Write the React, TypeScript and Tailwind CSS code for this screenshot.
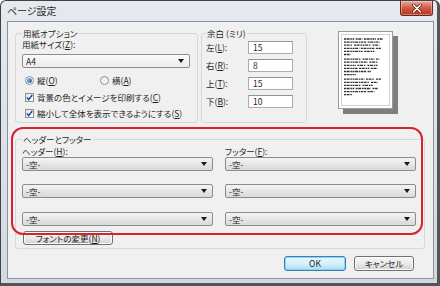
import type { ReactNode } from 'react';

// mnemonic letter (underlined access key)
function M({ children }: { children: ReactNode }) {
  return <span className="underline underline-offset-[1px]">{children}</span>;
}

function Combo({ value, white }: { value: string; white?: boolean }) {
  return (
    <div
      className={`flex h-[14px] items-center justify-between rounded-[2px] border border-[#8b8c8c] pl-[3px] pr-[5px] bg-gradient-to-b ${
        white ? 'from-[#fbfbfb] to-[#ececec]' : 'from-[#f4f4f4] to-[#d9d9d9]'
      }`}
    >
      <span className="text-[8.5px] leading-none">{value}</span>
      <svg width="6" height="4" viewBox="0 0 6 4">
        <path d="M0 0h6L3 4z" fill="#1a1a1a" />
      </svg>
    </div>
  );
}

function Radio({ checked, label }: { checked?: boolean; label: ReactNode }) {
  return (
    <div className="flex h-[12px] items-center gap-[3px]">
      <div className="flex h-[9px] w-[9px] items-center justify-center rounded-full border border-[#8e8f8f] bg-gradient-to-br from-[#e9e9e9] to-[#fbfbfb]">
        {checked && <div className="h-[5px] w-[5px] rounded-full bg-gradient-to-br from-[#8fc2ee] to-[#1d5d9e]" />}
      </div>
      <span className="whitespace-nowrap text-[8.5px] leading-none">{label}</span>
    </div>
  );
}

function Check({ label }: { label: ReactNode }) {
  return (
    <div className="flex h-[12px] items-center gap-[3px]">
      <div className="flex h-[9px] w-[9px] shrink-0 items-center justify-center border border-[#8e8f8f] bg-gradient-to-br from-[#e4e4e4] to-[#fbfbfb]">
        <svg width="7" height="7" viewBox="0 0 7 7">
          <path d="M0.8 3.6 2.7 5.6 6.2 1" fill="none" stroke="#21479b" strokeWidth="1.5" />
        </svg>
      </div>
      <span className="whitespace-nowrap text-[8.5px] leading-none">{label}</span>
    </div>
  );
}

function MarginRow({ label, value }: { label: ReactNode; value: string }) {
  return (
    <div className="flex h-[13px] items-center">
      <span className="w-[42px] text-[8.5px] leading-none">{label}</span>
      <div className="flex h-[13px] w-[45px] items-center border border-[#abadb3] border-t-[#8f939a] bg-white pl-[4px] text-[8.5px] leading-none">
        {value}
      </div>
    </div>
  );
}

const LINES = [
  [12, 8, 14, 6], [26, 14], [10, 20, 8], [18, 16, 6], [22, 12], [8],
  [20, 14, 4], [28, 10], [14, 10, 12], [16, 12, 8], [26, 4], [14],
  [24, 10, 6], [30, 8], [20, 12], [12, 18, 6], [26, 8], [10],
];

function Preview() {
  let y = 7;
  const rows: ReactNode[] = [];
  LINES.forEach((segs, i) => {
    let x = 5;
    segs.forEach((w, j) => {
      rows.push(
        <line
          key={`${i}-${j}`}
          x1={x}
          y1={y}
          x2={Math.min(x + w * 0.85, 47)}
          y2={y}
          stroke="#2e2e2e"
          strokeWidth="1.3"
          strokeDasharray="2 0.6 3 0.8 1.5 0.6"
        />
      );
      x += w * 0.85 + 1.5;
    });
    y += i === 5 || i === 11 ? 4.6 : 3.1;
  });
  return (
    <div className="ml-[31px] mt-[4px] h-[83px] w-[60px] shrink-0">
      <div className="relative h-[78px] w-[55px] border border-[#9a9a9a] bg-white shadow-[5px_5px_0_#7e7e7e]">
        <svg width="53" height="76" viewBox="0 0 53 76" className="block">
          <rect x="2.5" y="2.5" width="48" height="71" fill="none" stroke="#8a8a8a" strokeWidth="0.8" strokeDasharray="1 1" />
          {rows}
        </svg>
      </div>
    </div>
  );
}

function Button({ children, primary, className }: { children: ReactNode; primary?: boolean; className?: string }) {
  return (
    <div
      className={`flex items-center justify-center whitespace-nowrap rounded-[3px] border text-[8.5px] leading-none bg-gradient-to-b ${
        primary
          ? 'border-[#3c7fb1] from-[#eaf6fd] via-[#d9f0fc] to-[#a9dbf6] shadow-[inset_0_0_0_1px_#8fd3f4]'
          : 'border-[#707070] from-[#f4f4f4] via-[#ebebeb] to-[#d0d0d0] shadow-[inset_0_0_0_1px_#fcfcfc]'
      } ${className ?? ''}`}
    >
      {children}
    </div>
  );
}

export default function App() {
  return (
    <div className="h-[286px] w-[440px] overflow-hidden bg-white font-['Noto_Sans_CJK_JP',sans-serif] text-[#1f1f1f] [font-feature-settings:'palt']">
      {/* Window frame */}
      <div className="flex h-[286px] w-[440px] flex-col rounded-t-[6px] border border-b-[3px] border-r-[3px] border-[#3d4247] border-b-[#555] border-r-[#555] bg-gradient-to-b from-[#e6eaef] to-[#d2d9e1]">
        {/* Title bar */}
        <div className="flex h-[20px] shrink-0 items-start justify-between">
          <span className="pl-[6px] pt-[4px] text-[10px] leading-[12px] text-[#2b2b2b]">ページ設定</span>
          <div className="mr-[4px] flex h-[15px] w-[33px] items-center justify-center rounded-b-[3px] border border-t-0 border-[#6e2318] bg-gradient-to-b from-[#e9a99b] via-[#cf5a43] to-[#b8321f] shadow-[inset_0_0_0_1px_rgba(255,255,255,0.35)]">
            <svg width="10" height="9" viewBox="0 0 10 9">
              <path d="M1.5 1 8.5 8M8.5 1 1.5 8" stroke="#5a1a10" strokeWidth="3" strokeLinecap="round" />
              <path d="M1.5 1 8.5 8M8.5 1 1.5 8" stroke="#ffffff" strokeWidth="1.6" strokeLinecap="round" />
            </svg>
          </div>
        </div>

        {/* Client area */}
        <div className="relative mb-[4px] ml-[6px] mr-[3px] flex flex-1 flex-col border border-[#8a949e] bg-[#f0f0f0] px-[7px] pt-[5px]">
          {/* Top row */}
          <div className="flex items-start">
            <fieldset className="h-[96px] w-[183px] rounded-[3px] border border-[#d3d8dc] pl-[6px] pr-[7px]">
              <legend className="px-[1px] text-[8.5px] leading-[12px]">用紙オプション</legend>
              <div className="text-[8.5px] leading-[10px]">
                用紙サイズ(<M>Z</M>):
              </div>
              <div className="mt-[5px]">
                <Combo value="A4" white />
              </div>
              <div className="mt-[6px] flex">
                <div className="w-[78px] pl-[3px]">
                  <Radio checked label={<>縦(<M>O</M>)</>} />
                </div>
                <Radio label={<>横(<M>A</M>)</>} />
              </div>
              <div className="mt-[5px] pl-[3px]">
                <Check label={<>背景の色とイメージを印刷する(<M>C</M>)</>} />
              </div>
              <div className="mt-[4px] pl-[3px]">
                <Check label={<>縮小して全体を表示できるようにする(<M>S</M>)</>} />
              </div>
            </fieldset>

            <fieldset className="ml-[3px] h-[96px] w-[106px] rounded-[3px] border border-[#d3d8dc] pl-[4px]">
              <legend className="px-[1px] text-[8.5px] leading-[12px]">余白 (ミリ)</legend>
              <div className="mt-[2px] flex flex-col gap-[5px]">
                <MarginRow label={<>左(<M>L</M>):</>} value="15" />
                <MarginRow label={<>右(<M>R</M>):</>} value="8" />
                <MarginRow label={<>上(<M>T</M>):</>} value="15" />
                <MarginRow label={<>下(<M>B</M>):</>} value="10" />
              </div>
            </fieldset>

            <Preview />
          </div>

          {/* Header / footer group */}
          <fieldset className="mr-[1px] mt-[10px] rounded-[3px] border border-[#d3d8dc] pb-[3px] pl-[6px] pr-[8px]">
            <legend className="px-[1px] text-[8.5px] leading-[12px]">ヘッダーとフッター</legend>
            <div className="grid grid-cols-2 gap-x-[12px]">
              <div>
                <div className="mt-[1px] text-[8.5px] leading-[11px]">
                  ヘッダー(<M>H</M>):
                </div>
                <Combo value="-空-" />
                <div className="mt-[13px]">
                  <Combo value="-空-" />
                </div>
                <div className="mt-[14px]">
                  <Combo value="-空-" />
                </div>
              </div>
              <div>
                <div className="mt-[1px] text-[8.5px] leading-[11px]">
                  フッター(<M>F</M>):
                </div>
                <Combo value="-空-" />
                <div className="mt-[13px]">
                  <Combo value="-空-" />
                </div>
                <div className="mt-[14px]">
                  <Combo value="-空-" />
                </div>
              </div>
            </div>
            <Button className="ml-[1px] mt-[5px] h-[14px] w-[90px]">
              フォントの変更(<M>N</M>)
            </Button>
          </fieldset>

          {/* Dialog buttons */}
          <div className="mr-[12px] mt-[7px] flex justify-end gap-[8px]">
            <Button primary className="h-[15px] w-[62px]">OK</Button>
            <Button className="h-[15px] w-[60px]">キャンセル</Button>
          </div>

          {/* Red highlight around header / footer */}
          <div className="pointer-events-none absolute left-[3px] top-[105px] h-[108px] w-[412px] rounded-[12px] border-2 border-[#d8232d]" />
        </div>
      </div>
    </div>
  );
}
